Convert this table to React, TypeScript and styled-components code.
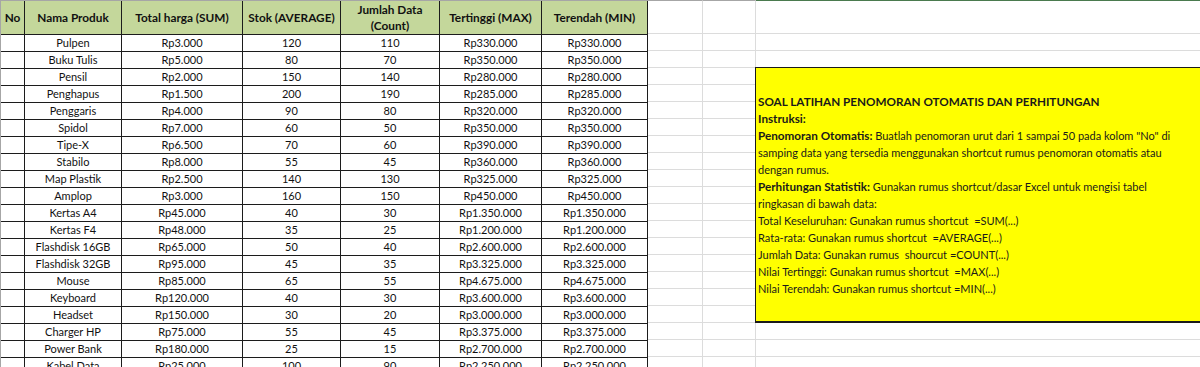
import * as React from "react";
import styled, { createGlobalStyle } from "styled-components";

const GlobalStyle = createGlobalStyle`
  html, body {
    margin: 0;
    padding: 0;
    background: #ffffff;
    overflow: hidden;
  }
  body {
    font-family: Lato, "Open Sans", "Liberation Sans", sans-serif;
    font-size: 11px;
    color: #111111;
  }
`;

const rows = [
  ["Pulpen", "Rp3.000", "120", "110", "Rp330.000", "Rp330.000"],
  ["Buku Tulis", "Rp5.000", "80", "70", "Rp350.000", "Rp350.000"],
  ["Pensil", "Rp2.000", "150", "140", "Rp280.000", "Rp280.000"],
  ["Penghapus", "Rp1.500", "200", "190", "Rp285.000", "Rp285.000"],
  ["Penggaris", "Rp4.000", "90", "80", "Rp320.000", "Rp320.000"],
  ["Spidol", "Rp7.000", "60", "50", "Rp350.000", "Rp350.000"],
  ["Tipe-X", "Rp6.500", "70", "60", "Rp390.000", "Rp390.000"],
  ["Stabilo", "Rp8.000", "55", "45", "Rp360.000", "Rp360.000"],
  ["Map Plastik", "Rp2.500", "140", "130", "Rp325.000", "Rp325.000"],
  ["Amplop", "Rp3.000", "160", "150", "Rp450.000", "Rp450.000"],
  ["Kertas A4", "Rp45.000", "40", "30", "Rp1.350.000", "Rp1.350.000"],
  ["Kertas F4", "Rp48.000", "35", "25", "Rp1.200.000", "Rp1.200.000"],
  ["Flashdisk 16GB", "Rp65.000", "50", "40", "Rp2.600.000", "Rp2.600.000"],
  ["Flashdisk 32GB", "Rp95.000", "45", "35", "Rp3.325.000", "Rp3.325.000"],
  ["Mouse", "Rp85.000", "65", "55", "Rp4.675.000", "Rp4.675.000"],
  ["Keyboard", "Rp120.000", "40", "30", "Rp3.600.000", "Rp3.600.000"],
  ["Headset", "Rp150.000", "30", "20", "Rp3.000.000", "Rp3.000.000"],
  ["Charger HP", "Rp75.000", "55", "45", "Rp3.375.000", "Rp3.375.000"],
  ["Power Bank", "Rp180.000", "25", "15", "Rp2.700.000", "Rp2.700.000"],
  ["Kabel Data", "Rp25.000", "100", "90", "Rp2.250.000", "Rp2.250.000"],
];

const headers = [
  "No",
  "Nama Produk",
  "Total harga (SUM)",
  "Stok (AVERAGE)",
  "Jumlah Data (Count)",
  "Tertinggi (MAX)",
  "Terendah (MIN)",
];

const Sheet = styled.div`
  display: flex;
  align-items: flex-start;
  width: 1220px;
  height: 367px;
  overflow: hidden;
  border-left: 1px solid #a6a6a6;
`;

const DataTable = styled.div`
  display: grid;
  grid-template-columns: 24px 97px 121px 98px 99px 102px 106px;
  grid-template-rows: 34px repeat(20, 17px);
  border-top: 1px solid #a6a6a6;
`;

const HeadCell = styled.div`
  box-sizing: border-box;
  display: flex;
  align-items: center;
  justify-content: center;
  text-align: center;
  background: #c4d79b;
  font-weight: 700;
  font-size: 11.8px;
  line-height: 16px;
  padding: 0 4px;
  border-right: 1px solid #1c1c1c;
  border-bottom: 1px solid #1c1c1c;
`;

const Cell = styled.div`
  box-sizing: border-box;
  display: flex;
  align-items: center;
  justify-content: center;
  white-space: nowrap;
  line-height: 16px;
  border-right: 1px solid #1c1c1c;
  border-bottom: 1px solid #1c1c1c;
`;

const SideGrid = styled.div`
  display: grid;
  grid-template-columns: 55px 53px 460px;
  grid-template-rows: 34px repeat(20, 17px);
`;

const GridCell = styled.div<{ $col: number; $top: boolean }>`
  box-sizing: border-box;
  border-top: ${(p) =>
    p.$top ? `1px solid ${p.$col === 3 ? "#4a7a4e" : "#a6a6a6"}` : "none"};
  border-right: ${(p) => (p.$col === 3 ? "none" : "1px solid #dcdcdc")};
  border-bottom: 1px solid #dcdcdc;
`;

const NoteBox = styled.div`
  grid-column: 3;
  grid-row: 4 / 19;
  box-sizing: border-box;
  display: flex;
  flex-direction: column;
  justify-content: center;
  background: #ffff00;
  border-top: 1px solid #1a1a1a;
  border-left: 1px solid #1a1a1a;
  border-bottom: 2px solid #1a1a1a;
  padding: 0 0 0 2px;
  margin: -1px 0 0 -1px;
  color: #1a1a1a;
`;

const NoteText = styled.div`
  line-height: 17px;
  white-space: nowrap;
`;

const Line = styled.div``;

const Bold = styled.b`
  font-weight: 700;
  font-size: 11.7px;
`;

export default function App() {
  const sideCells: React.ReactNode[] = [];
  for (let r = 0; r < 21; r++) {
    for (let c = 1; c <= 3; c++) {
      if (c === 3 && r >= 3 && r <= 17) continue;
      sideCells.push(
        <GridCell
          key={`${r}-${c}`}
          $col={c}
          $top={r === 0}
          style={{ gridColumn: c, gridRow: r + 1 }}
        />
      );
    }
  }

  return (
    <>
      <GlobalStyle />
      <Sheet>
        <DataTable>
          {headers.map((h) => (
            <HeadCell key={h}>{h}</HeadCell>
          ))}
          {rows.map((row) => (
            <React.Fragment key={row[0]}>
              <Cell />
              {row.map((v, i) => (
                <Cell key={i}>{v}</Cell>
              ))}
            </React.Fragment>
          ))}
        </DataTable>
        <SideGrid>
          {sideCells}
          <NoteBox>
            <NoteText>
              <Line>
                <Bold>SOAL LATIHAN PENOMORAN OTOMATIS DAN PERHITUNGAN</Bold>
              </Line>
              <Line>
                <Bold>Instruksi:</Bold>
              </Line>
              <Line>
                <Bold>Penomoran Otomatis:</Bold> Buatlah penomoran urut dari 1
                sampai 50 pada kolom "No" di
              </Line>
              <Line>
                samping data yang tersedia menggunakan shortcut rumus penomoran
                otomatis atau
              </Line>
              <Line>dengan rumus.</Line>
              <Line>
                <Bold>Perhitungan Statistik:</Bold> Gunakan rumus shortcut/dasar
                Excel untuk mengisi tabel
              </Line>
              <Line>ringkasan di bawah data:</Line>
              <Line>Total Keseluruhan: Gunakan rumus shortcut&nbsp; =SUM(...)</Line>
              <Line>Rata-rata: Gunakan rumus shortcut&nbsp; =AVERAGE(...)</Line>
              <Line>Jumlah Data: Gunakan rumus&nbsp; shourcut =COUNT(...)</Line>
              <Line>Nilai Tertinggi: Gunakan rumus shortcut&nbsp; =MAX(...)</Line>
              <Line>Nilai Terendah: Gunakan rumus shortcut =MIN(...)</Line>
            </NoteText>
          </NoteBox>
        </SideGrid>
      </Sheet>
    </>
  );
}
